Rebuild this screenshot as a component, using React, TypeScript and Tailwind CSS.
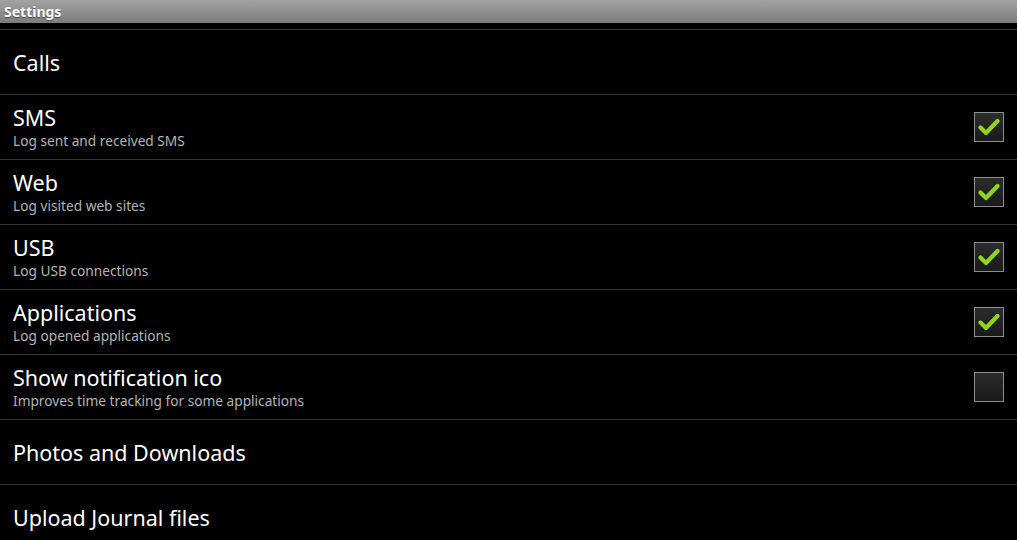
import React from 'react'

type Pref = {
  title: string
  summary?: string
  checked?: boolean
}

const prefs: Pref[] = [
  { title: 'Calls' },
  { title: 'SMS', summary: 'Log sent and received SMS', checked: true },
  { title: 'Web', summary: 'Log visited web sites', checked: true },
  { title: 'USB', summary: 'Log USB connections', checked: true },
  { title: 'Applications', summary: 'Log opened applications', checked: true },
  { title: 'Show notification ico', summary: 'Improves time tracking for some applications', checked: false },
  { title: 'Photos and Downloads' },
  { title: 'Upload Journal files' },
]

function CheckBox({ checked }: { checked: boolean }) {
  return (
    <div className="w-[30px] h-[30px] border border-[#8e8e8e] bg-gradient-to-b from-[#2c2c2c] to-[#1a1a1a] flex items-center justify-center">
      {checked && (
        <svg width="22" height="18" viewBox="0 0 22 18">
          <path
            d="M2.5 9.5 L8 15 L19.5 3"
            fill="none"
            stroke="#8fd61a"
            strokeWidth="4.2"
            strokeLinecap="round"
            strokeLinejoin="round"
          />
        </svg>
      )}
    </div>
  )
}

function PrefRow({ pref }: { pref: Pref }) {
  return (
    <div className="h-[65px] border-t border-[#343434] flex items-center px-[13px] shrink-0">
      <div className="flex-1 flex flex-col pt-[1px]">
        <span className="text-[21.5px] leading-[26px] text-white">{pref.title}</span>
        {pref.summary && (
          <span className="text-[13.7px] leading-[19px] text-[#b4b4b4]">{pref.summary}</span>
        )}
      </div>
      {pref.checked !== undefined && <CheckBox checked={pref.checked} />}
    </div>
  )
}

export default function App() {
  return (
    <div className="w-[1017px] h-[540px] bg-black overflow-hidden flex flex-col font-['Noto_Sans','DejaVu_Sans',sans-serif]">
      {/* Title bar */}
      <div className="h-[23px] shrink-0 bg-gradient-to-b from-[#a2a2a2] to-[#7c7c7c] flex items-center pl-[4px]">
        <span className="text-[14px] font-bold text-white [text-shadow:0_1px_1px_rgba(0,0,0,0.5)]">Settings</span>
      </div>
      <div className="h-[6px] shrink-0" />
      {/* Preference list */}
      <div className="flex flex-col">
        {prefs.map(p => (
          <PrefRow key={p.title} pref={p} />
        ))}
      </div>
    </div>
  )
}
